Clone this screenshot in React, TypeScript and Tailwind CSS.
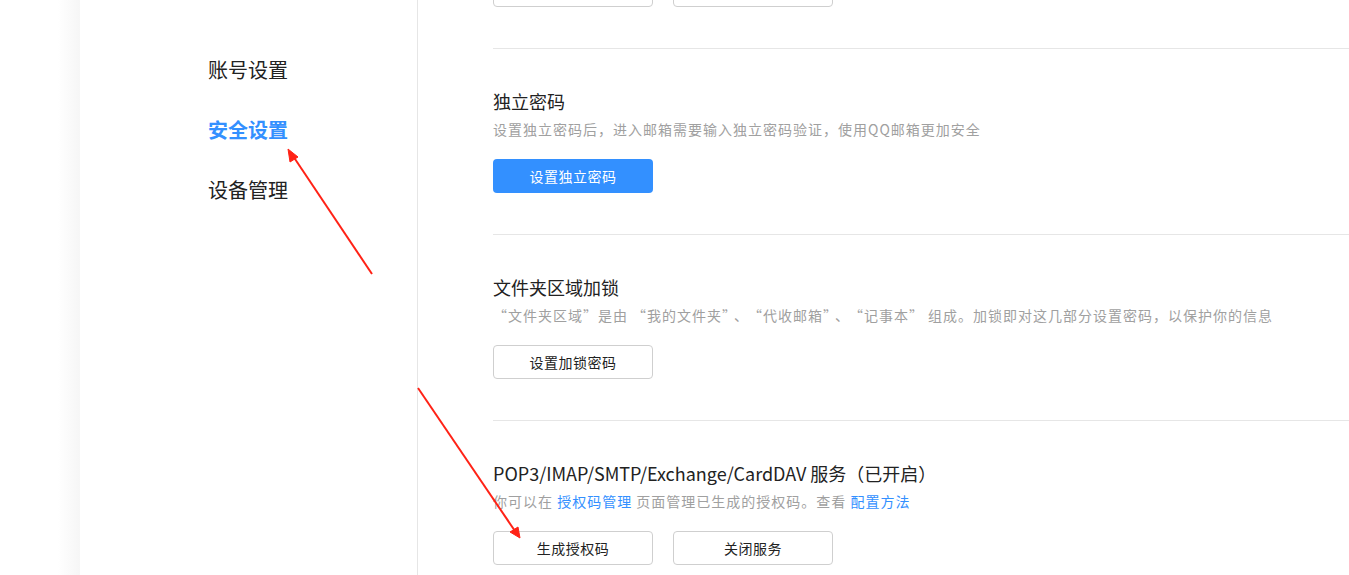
import React from 'react';

const font = "font-['Microsoft_YaHei','Noto_Sans_CJK_SC',sans-serif]";

const navItems = [
  { label: '账号设置', active: false },
  { label: '安全设置', active: true },
  { label: '设备管理', active: false },
];

type Btn = { label: string; primary?: boolean };

// quote marks a bit wider, like the original font draws them
const L = () => <span className="ml-[4px]">“</span>;
const R = () => <span className="mr-[4px]">”</span>;
const Dun = () => <span className="mr-[2px]">、</span>;

const Section: React.FC<{
  title: string;
  desc: React.ReactNode;
  buttons: Btn[];
  className?: string;
}> = ({ title, desc, buttons, className }) => (
  <div className={`pt-[40px] pb-[41px] border-b border-[#e6e6e6] ${className ?? ''}`}>
    <div className="text-[18px] leading-[24px] text-[#222]">{title}</div>
    <div className="mt-[6px] text-[14px] leading-[20px] tracking-[1px] text-[#a0a0a0] whitespace-nowrap">
      {desc}
    </div>
    <div className="mt-[20px] flex gap-[20px]">
      {buttons.map((b) => (
        <button
          key={b.label}
          className={
            b.primary
              ? 'w-[160px] h-[34px] rounded-[4px] bg-[#3390ff] text-white text-[14px] tracking-[0.5px]'
              : 'w-[160px] h-[34px] rounded-[4px] border border-[#cfcfcf] bg-white text-[#222] text-[14px] tracking-[0.5px]'
          }
        >
          {b.label}
        </button>
      ))}
    </div>
  </div>
);

const Arrows = () => (
  <svg
    className="absolute inset-0 pointer-events-none"
    width={1349}
    height={575}
    viewBox="0 0 1349 575"
  >
    <g stroke="#ff2216" strokeWidth={2} fill="#ff2216">
      <line x1={372} y1={274} x2={293} y2={156} />
      <polygon points="288,149 298,157 290,162" strokeWidth={1} />
      <line x1={418} y1={388} x2={515} y2={531} />
      <polygon points="520,538 510,532 518,527" strokeWidth={1} />
    </g>
  </svg>
);

export default function App() {
  return (
    <div className={`relative w-[1349px] h-[575px] overflow-hidden bg-white flex ${font}`}>
      <div className="w-[58px] shrink-0 bg-white" />
      <div className="w-[22px] shrink-0 bg-gradient-to-r from-white to-[#f6f6f6]" />
      <aside className="w-[338px] shrink-0 border-r border-[#e6e6e6] pl-[128px] pt-[55px]">
        {navItems.map((n) => (
          <div
            key={n.label}
            className={
              n.active
                ? 'h-[60px] text-[20px] leading-[30px] font-bold text-[#3390ff]'
                : 'h-[60px] text-[20px] leading-[30px] text-[#222]'
            }
          >
            {n.label}
          </div>
        ))}
      </aside>
      <main className="flex-1 pl-[75px]">
        <Section
          className="mt-[-137px]"
          title="QQ邮箱密码"
          desc="修改QQ邮箱的登录密码"
          buttons={[{ label: '修改密码' }, { label: '忘记密码' }]}
        />
        <Section
          title="独立密码"
          desc="设置独立密码后，进入邮箱需要输入独立密码验证，使用QQ邮箱更加安全"
          buttons={[{ label: '设置独立密码', primary: true }]}
        />
        <Section
          title="文件夹区域加锁"
          desc={
            <>
              “文件夹区域”是由<L />我的文件夹<R /><Dun /><L />代收邮箱<R /><Dun /><L />记事本<R />
              组成。加锁即对这几部分设置密码，以保护你的信息
            </>
          }
          buttons={[{ label: '设置加锁密码' }]}
        />
        <Section
          title="POP3/IMAP/SMTP/Exchange/CardDAV 服务（已开启）"
          desc={
            <>
              你可以在 <span className="text-[#3390ff]">授权码管理</span> 页面管理已生成的授权码。查看{' '}
              <span className="text-[#3390ff]">配置方法</span>
            </>
          }
          buttons={[{ label: '生成授权码' }, { label: '关闭服务' }]}
        />
      </main>
      <Arrows />
    </div>
  );
}
